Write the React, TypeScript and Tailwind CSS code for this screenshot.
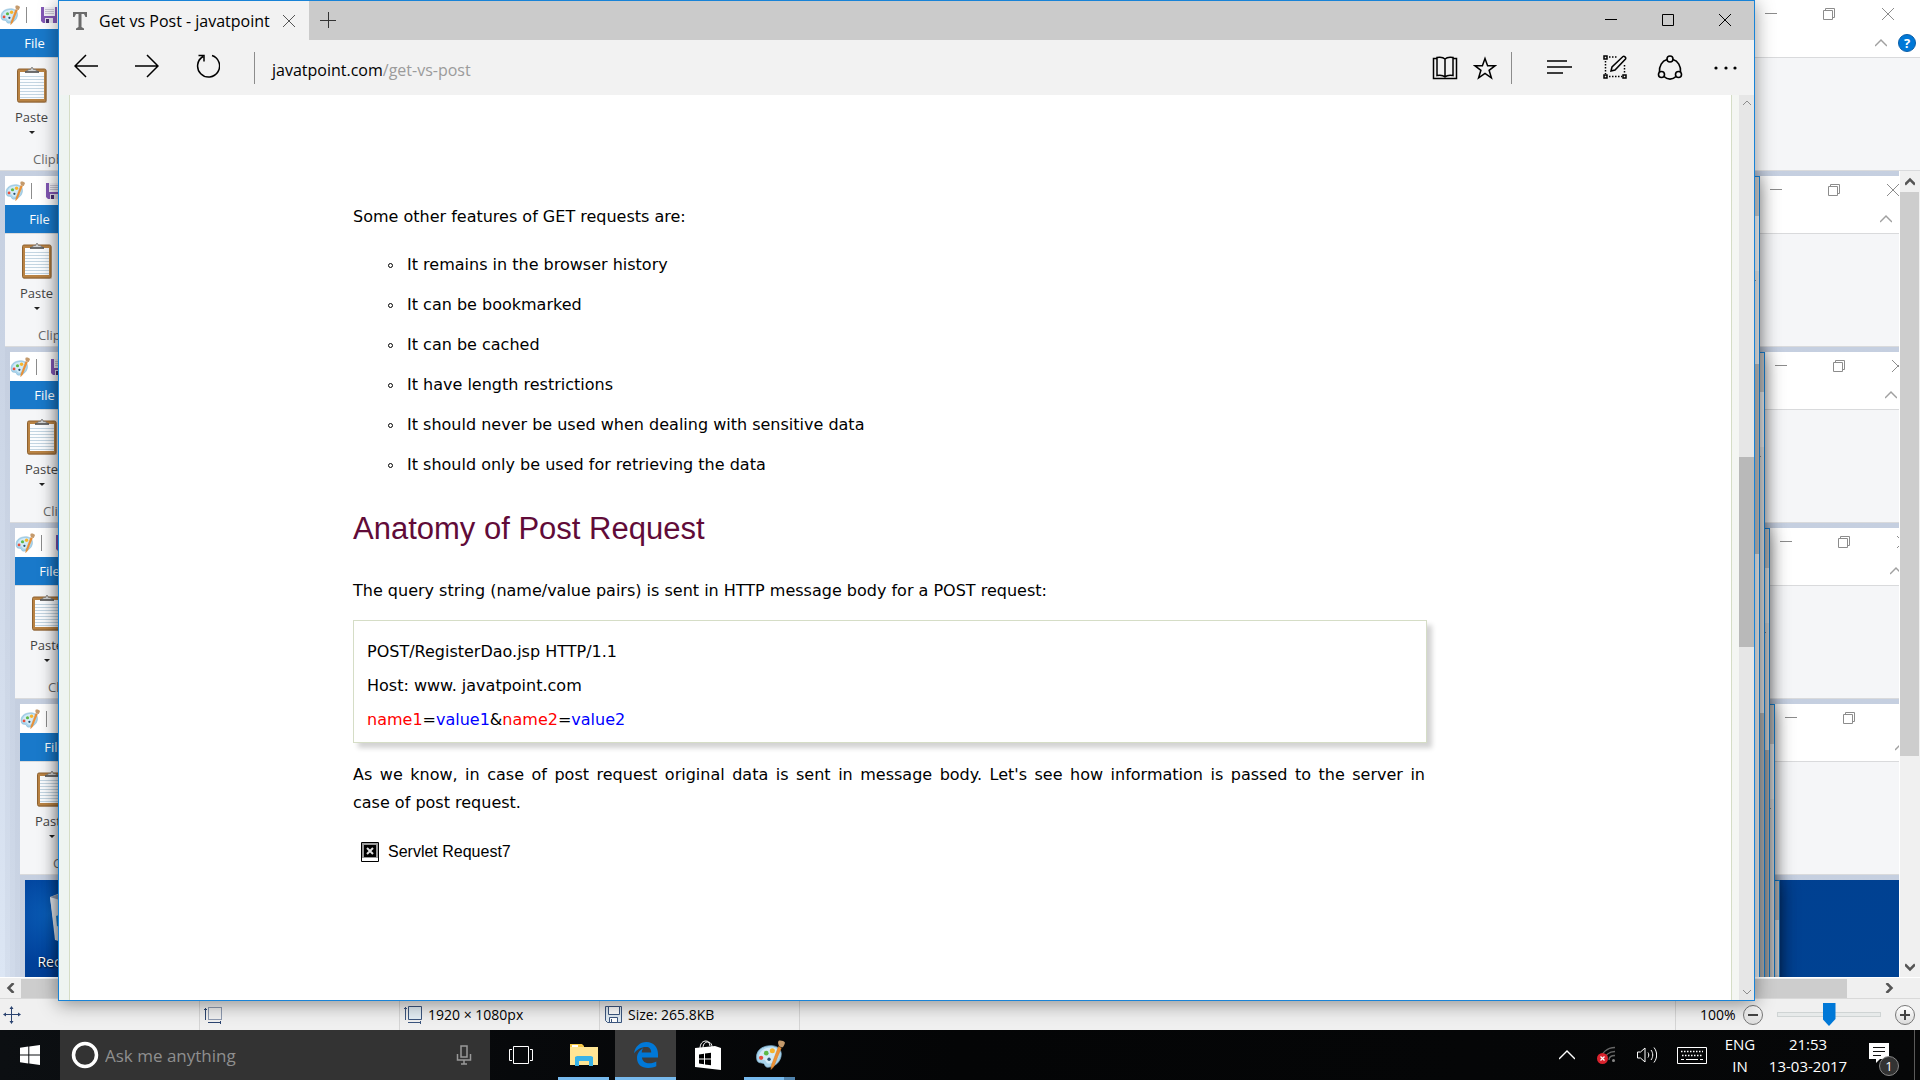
import React from 'react';

const uiFont = "font-['Open_Sans','Noto_Sans',sans-serif]";
const pageFont = "font-['DejaVu_Sans',sans-serif]";

/* ---------- Icons ---------- */

const PaletteIcon: React.FC<{ className?: string }> = ({ className }) => (
  <svg viewBox="0 0 32 32" className={className}>
    <path d="M2 21C0 12 7 6 17 6c7 0 11 4 11 9 0 8-7 14-14 14-4 0-3-3-5-4-3-1-6 0-7-4z" fill="#a9d4ec" stroke="#7fb0cf" strokeWidth=".8" />
    <path d="M4 19c0-7 6-11 13-11 5 0 9 2 9 6 0 6-5 10-10 11-4 1-4-3-6-4-2 0-5 1-6-2z" fill="#d3ebf7" />
    <circle cx="6.500" cy="19" r="2.300" fill="#e8503c" />
    <circle cx="12" cy="14" r="2.500" fill="#5cb947" />
    <circle cx="18.500" cy="11.500" r="2.700" fill="#f7b32b" />
    <circle cx="15" cy="20.500" r="1.800" fill="#27506f" />
    <path d="M25 7l3 1.500-8 20-3 3 .5-4.500z" fill="#ef9234" stroke="#c97a2c" strokeWidth=".5" />
    <path d="M25 1c2-1 6 0 7 2-1 3-2 5-3 5l-3-1c-1-2-2-4-1-6z" fill="#c49a6c" />
  </svg>
);

const SaveIcon = () => (
  <svg viewBox="0 0 16 16" className="size-4 shrink-0">
    <path d="M0 0h16v16H2l-2-2z" fill="#8358b5" />
    <path d="M3 0h11v9H3z" fill="#f4f3f8" />
    <path d="M4 2.500h9M4 4.500h9M4 6.500h9" stroke="#c9c6d4" />
    <path d="M4 11h8v5H4z" fill="#e7e4ef" />
    <path d="M5 12h3v4H5z" fill="#4b3274" />
  </svg>
);

const ClipboardIcon = () => (
  <svg viewBox="0 0 32 38" className="h-[38px] w-8">
    <rect x="2" y="4" width="29" height="33" rx="1.500" fill="#8d5f2b" opacity=".35" />
    <rect x="1.500" y="3" width="28.500" height="33" rx="1.500" fill="#b98344" stroke="#8d6130" />
    <rect x="4" y="6" width="24" height="27" fill="#fbfdff" />
    <path d="M4 10.500h24M4 13.500h24M4 16.500h24M4 19.500h24M4 22.500h24M4 25.500h24M4 28.500h24M4 31.500h24" stroke="#c3d5e2" />
    <path d="M9 6l4-2.500h1.500L16 1l1.500 2.500H19L23 6z" fill="#d0d0d0" stroke="#777" strokeWidth=".8" />
    <path d="M9 6h14" stroke="#555" strokeWidth="1.500" />
  </svg>
);

const Minimize = () => (
  <svg viewBox="0 0 12 12" className="size-3" stroke="currentColor"><path d="M0 5.500h12" /></svg>
);
const Maximize = () => (
  <svg viewBox="0 0 12 12" className="size-3" stroke="currentColor" fill="none"><path d="M.5.500h11v11H.500z" /></svg>
);
const Restore = () => (
  <svg viewBox="0 0 12 12" className="size-3" stroke="currentColor" fill="none">
    <path d="M.5 2.500h9v9H.500zM2.500 2.500v-2h9v9h-2" />
  </svg>
);
const Close = () => (
  <svg viewBox="0 0 12 12" className="size-3" stroke="currentColor"><path d="M0 0l12 12M12 0L0 12" /></svg>
);

const Chevron: React.FC<{ d: string; className?: string; width?: number }> = ({ d, className, width = 1 }) => (
  <svg viewBox="0 0 12 12" className={className} fill="none" stroke="currentColor" strokeWidth={width}>
    <path d={d} />
  </svg>
);
const UP = 'M0 9l6-6 6 6';
const DOWN = 'M0 3l6 6 6-6';
const LEFT = 'M9 0L3 6l6 6';
const RIGHT = 'M3 0l6 6-6 6';

const RecycleBinIcon = () => (
  <svg viewBox="0 0 50 50" className="size-[50px]">
    <path d="M1 5l10-4 28 1 10 4-5 42-8 2H12l-5-2z" fill="#c4ccd8" />
    <path d="M1 5l10 2v42l-5-1z" fill="#e4e8ee" />
    <path d="M1 5l10-3 28 1 10 3-12 3H14z" fill="#8f9bb0" />
    <path d="M7 24l9-3 8 9-6 8-10-4z" fill="#1d86d6" />
  </svg>
);

/* ---------- Paint window ---------- */

const IconButton: React.FC<{ label: string; className: string; children: React.ReactNode }> = ({ label, className, children }) => (
  <button type="button" aria-label={label} className={`flex shrink-0 items-center justify-center ${className}`}>
    {children}
  </button>
);

const PaintRibbon: React.FC<{ level: number }> = ({ level }) => (
  <header className="shrink-0 bg-white">
    <div className="flex h-[29px] items-center">
      <PaletteIcon className="size-5" />
      <div className="ml-1.5 h-4 w-px bg-[#8c8c8c]" />
      <div className="ml-3.5"><SaveIcon /></div>
      <div className="ml-auto flex self-start text-[#8c8c8c]">
        <IconButton label="Minimize" className="h-7 w-[62px]"><Minimize /></IconButton>
        <IconButton label="Restore" className="h-7 w-[54px]"><Restore /></IconButton>
        <IconButton label="Close" className="h-7 w-16"><Close /></IconButton>
      </div>
    </div>
    <div className="flex h-7 items-center">
      <button type="button" className="h-7 w-[69px] bg-[#1979ca] text-[13px] leading-7 text-white">File</button>
      <div className="ml-auto flex items-center gap-[11px] pr-1">
        <button type="button" aria-label="Collapse the ribbon" className="text-[#a0a0a0]">
          <Chevron d={UP} className="size-3" width={1.5} />
        </button>
        <button type="button" aria-label="Help" className="size-[18px] rounded-full border border-[#0a5ea8] bg-[#0078d7] text-[13px] leading-4 font-bold text-white">
          {level === 0 && '?'}
        </button>
      </div>
    </div>
    <div className="flex h-[114px] flex-col border-y border-[#d9dadc] bg-[#f5f6f8] pt-2">
      <button type="button" className="flex w-[63px] flex-col items-center">
        <ClipboardIcon />
        <span className="mt-[3px] text-[13px] leading-5 text-[#444]">Paste</span>
        <svg viewBox="0 0 6 3" className="mt-1 h-[3px] w-1.5"><path d="M0 0h6L3 3z" fill="#222" /></svg>
      </button>
      <span className="mt-[15px] ml-[33px] text-[13px] leading-5 text-[#6a6a6a]">Clipboard</span>
    </div>
  </header>
);

const HorizontalScroll = () => (
  <div className="flex h-[21px] shrink-0 items-center border-t border-white bg-[#f0f0f0] pr-6 text-[#555]">
    <IconButton label="Scroll left" className="h-5 w-[21px]"><Chevron d={LEFT} className="size-2.5" width={3} /></IconButton>
    <div className="mr-[35px] h-[19px] flex-1 bg-[#cdcdcd]" />
    <IconButton label="Scroll right" className="h-5 w-3.5"><Chevron d={RIGHT} className="size-2.5" width={3} /></IconButton>
  </div>
);

const VerticalScroll = () => (
  <div className="flex w-[21px] shrink-0 flex-col items-center border-l border-white bg-[#f0f0f0] text-[#555]">
    <IconButton label="Scroll up" className="h-[21px] w-5"><Chevron d={UP} className="size-2.5" width={3} /></IconButton>
    <div className="w-[19px] flex-[564] self-start bg-[#cdcdcd]" />
    <div className="flex-[200]" />
    <IconButton label="Scroll down" className="h-[21px] w-5"><Chevron d={DOWN} className="size-2.5" width={3} /></IconButton>
  </div>
);

const ZoomButton: React.FC<{ label: string; d: string }> = ({ label, d }) => (
  <button type="button" aria-label={label} className="size-5 shrink-0 rounded-full border border-[#777] bg-gradient-to-b from-white to-[#dcdcdc]">
    <svg viewBox="0 0 18 18" className="size-[18px]" stroke="#444" strokeWidth="2"><path d={d} /></svg>
  </button>
);

const statusCell = 'flex h-full w-[200px] shrink-0 items-center gap-[5px] border-r border-[#d5d5d5] pb-0.5';

const StatusBar = () => (
  <footer className="flex h-8 shrink-0 items-center border-t border-[#d9d9d9] bg-[#f0f0f0] pt-0.5 text-sm text-black">
    <div className={`${statusCell} pl-[3px]`}>
      <svg viewBox="0 0 18 18" className="size-[18px]" stroke="#2b4470" fill="#2b4470">
        <path d="M8.500 1v16M1 8.500h16" />
        <path d="M8.500 0l2 3h-4zM8.500 18l2-3h-4zM0 8.500l3-2v4zM18 8.500l-3-2v4z" stroke="none" />
      </svg>
    </div>
    <div className={`${statusCell} pl-1`}>
      <svg viewBox="0 0 19 18" className="h-[18px] w-[19px]" fill="none" stroke="#2b4470">
        <path d="M4.500 1.500h13v12h-13z" strokeDasharray="1 1" />
        <path d="M1.500 14V2M0 3.500h3M4 16.500h13M16.500 15v3" />
      </svg>
    </div>
    <div className={`${statusCell} pl-1`}>
      <svg viewBox="0 0 19 18" className="h-[18px] w-[19px]" fill="none" stroke="#3b557e">
        <path d="M4.500.500h13v13h-13z" fill="#e3eef5" />
        <path d="M1.500 14V1M0 2.500h3M4 16.500h13M16.500 15v3" />
      </svg>
      <span>1920 × 1080px</span>
    </div>
    <div className={`${statusCell} pl-[5px]`}>
      <svg viewBox="0 0 18 18" className="size-[18px]" fill="#dfeaf2" stroke="#3b557e">
        <path d="M.5.500h16v16h-14l-2-2z" />
        <path d="M3.500.500h11v8h-11zM4.500 11.500h8v5h-8z" fill="#fff" />
        <path d="M6.500 13v3" />
      </svg>
      <span>Size: 265.8KB</span>
    </div>
    <div className="ml-auto flex h-full w-[245px] items-center border-l border-[#d5d5d5] pr-[5px] pb-0.5 pl-6">
      <span className="w-[43px]">100%</span>
      <ZoomButton label="Zoom out" d="M4 9h10" />
      <input
        type="range"
        aria-label="Zoom"
        defaultValue={50}
        className="mx-3.5 h-6 min-w-0 flex-1 appearance-none bg-transparent [&::-webkit-slider-runnable-track]:h-[5px] [&::-webkit-slider-runnable-track]:border [&::-webkit-slider-runnable-track]:border-[#cfd4d4] [&::-webkit-slider-runnable-track]:bg-[#e7eaea] [&::-webkit-slider-thumb]:-mt-2.5 [&::-webkit-slider-thumb]:h-[23px] [&::-webkit-slider-thumb]:w-[13px] [&::-webkit-slider-thumb]:appearance-none [&::-webkit-slider-thumb]:bg-[#0078d7] [&::-webkit-slider-thumb]:[clip-path:polygon(0_0,100%_0,100%_70%,50%_100%,0_70%)]"
      />
      <ZoomButton label="Zoom in" d="M4 9h10M9 4v10" />
    </div>
  </footer>
);

const Wallpaper = () => (
  <div className="h-full bg-[#004494] bg-[radial-gradient(circle_at_24px_34px,#0a5cb5_0,#00409a_50px,transparent_90px),linear-gradient(165deg,#003c8e_0,#004494_50%,#00509f_100%)]">
    <div className="flex w-[98px] flex-col items-center pt-3">
      <RecycleBinIcon />
      <span className="mt-2 text-sm leading-6 text-white [text-shadow:1px_1px_2px_#000]">Recycle Bin</span>
    </div>
  </div>
);

// Each capture in the Paint canvas shows the desktop of the capture before it.
const LAST_LEVEL = 5;

const Screen: React.FC<{ level: number; children?: React.ReactNode }> = ({ level, children }) => (
  <div className="relative h-full">
    {level === LAST_LEVEL ? (
      <Wallpaper />
    ) : (
      <div className="flex h-full flex-col">
        <PaintRibbon level={level} />
        <div className="flex min-h-0 flex-1">
          <div className="min-w-0 flex-1 overflow-hidden bg-gradient-to-b from-[#c5cfe0] to-[#dce6f4] pt-[5px] pl-[5px]">
            <div className="h-screen w-screen">
              <Screen level={level + 1} />
            </div>
          </div>
          {level === 0 && <VerticalScroll />}
        </div>
        {level === 0 && <HorizontalScroll />}
        {level === 0 && <StatusBar />}
      </div>
    )}
    <BrowserWindow level={level}>{children}</BrowserWindow>
  </div>
);

/* ---------- Browser window ---------- */

const thumbs = [
  'mt-[342px] h-[190px]',
  'mt-[73px] h-[190px]',
  'mt-[246px] h-[300px]',
  'mt-[107px] h-[260px]',
  'hidden',
  'hidden',
];

const TitleBar = () => (
  <>
    <div className="flex h-[39px] w-[250px] items-center bg-[#f2f2f2] pl-3.5">
      <svg viewBox="0 0 14 18" className="h-[18px] w-3.5" fill="#6b6b6b">
        <path d="M0 0h14v5h-1.500L11 2H8.500v13l2.500 1.500V18H3v-1.500L5.500 15V2H3L1.500 5H0z" />
      </svg>
      <span className="ml-3 w-[180px] text-base leading-5 text-black">Get vs Post - javatpoint</span>
      <IconButton label="Close tab" className="size-5 text-[#555]"><Close /></IconButton>
    </div>
    <IconButton label="New tab" className="h-[37px] w-[38px]">
      <svg viewBox="0 0 16 16" className="size-4" stroke="#333"><path d="M0 8.500h16M8.500 0v16" /></svg>
    </IconButton>
    <div className="mr-px ml-auto flex text-black">
      <IconButton label="Minimize window" className="h-[38px] w-[57px]"><Minimize /></IconButton>
      <IconButton label="Maximize window" className="h-[38px] w-[57px]"><Maximize /></IconButton>
      <IconButton label="Close window" className="h-[38px] w-[57px]"><Close /></IconButton>
    </div>
  </>
);

const Toolbar = () => (
  <>
    <IconButton label="Back" className="h-[53px] w-[54px]">
      <svg viewBox="0 0 24 24" className="mb-1 size-6" fill="none" stroke="#000" strokeWidth="1.500"><path d="M24 12H1M12 1L1 12l11 11" /></svg>
    </IconButton>
    <IconButton label="Forward" className="h-[53px] w-[68px]">
      <svg viewBox="0 0 24 24" className="mb-1 size-6" fill="none" stroke="#000" strokeWidth="1.500"><path d="M0 12h23M12 1l11 11-11 11" /></svg>
    </IconButton>
    <IconButton label="Refresh" className="h-[53px] w-[54px]">
      <svg viewBox="0 0 24 24" className="mb-1 size-6" fill="none" stroke="#000" strokeWidth="1.500">
        <path d="M7 2.500a11 11 0 1 0 9-1M2.500 1.500H8v6" />
      </svg>
    </IconButton>
    <div className="ml-[19px] h-8 w-px bg-[#8c8c8c]" />
    <div
      role="textbox"
      aria-label="Address"
      contentEditable
      suppressContentEditableWarning
      className="ml-[17px] min-w-0 flex-1 pt-1 text-base leading-6 text-black outline-none"
    >
      javatpoint.com<span className="text-[#9b9b9b]">/get-vs-post</span>
    </div>
    <IconButton label="Reading view" className="h-[55px] w-10">
      <svg viewBox="0 0 26 24" className="h-6 w-[26px]" fill="none" stroke="#000" strokeWidth="1.500">
        <path d="M5 2.500H1.500v20h23v-20H21" />
        <path d="M13 3v17.500M13 3c-2-2-5-2-8-1.500v18c3-.5 6-.5 8 1.500 2-2 5-2 8-1.500v-18c-3-.5-6-.5-8 1.500z" />
      </svg>
    </IconButton>
    <IconButton label="Add to favorites" className="h-[55px] w-10">
      <svg viewBox="0 0 24 24" className="size-6" fill="none" stroke="#000" strokeWidth="1.500">
        <path d="M12 2.500l2.600 7.200h7.600l-6.100 4.600 2.300 7.500L12 17.300l-6.400 4.500 2.300-7.500-6.100-4.600h7.600z" />
      </svg>
    </IconButton>
    <div className="mr-5 ml-1.5 h-8 w-px bg-[#8c8c8c]" />
    <IconButton label="Hub" className="h-[53px] w-[55px]">
      <svg viewBox="0 0 25 16" className="mb-0.5 h-4 w-[25px]" stroke="#000" strokeWidth="1.500"><path d="M0 2h20M0 8h25M0 14h16" /></svg>
    </IconButton>
    <IconButton label="Make a web note" className="h-[53px] w-[55px]">
      <svg viewBox="0 0 24 24" className="mb-0.5 size-6" fill="none" stroke="#000" strokeWidth="1.500">
        <path d="M1 1h3v3H1zM1 20h3v3H1zM20 20h3v3h-3z" />
        <path d="M6 2h9M2.500 6v13M6 21.500h13M21.500 10v9" strokeDasharray="1.500 1.500" />
        <path d="M8 16l1-4L20 1.500c1-.8 3.500.8 2.500 2.500L12 15z" />
      </svg>
    </IconButton>
    <IconButton label="Share" className="h-[53px] w-[55px]">
      <svg viewBox="0 0 26 26" className="size-[26px]" fill="none" stroke="#000" strokeWidth="1.600">
        <circle cx="13" cy="4" r="3" />
        <circle cx="4.500" cy="19.500" r="3" />
        <circle cx="21.500" cy="19.500" r="3" />
        <path d="M10 4.500C5 6 2 11 2.500 17M16 4.500c5 1.500 8 6.500 7.500 12.500M7 21.500c3.500 3.500 8.500 3.500 12 0" />
      </svg>
    </IconButton>
    <IconButton label="More" className="h-[55px] w-[57px]">
      <svg viewBox="0 0 24 4" className="h-1 w-6"><circle cx="2" cy="2" r="1.600" /><circle cx="12" cy="2" r="1.600" /><circle cx="21" cy="2" r="1.600" /></svg>
    </IconButton>
  </>
);

const BrowserWindow: React.FC<{ level: number; children?: React.ReactNode }> = ({ level, children }) => (
  <section className="absolute top-0 right-[165px] bottom-[29px] left-[58px] flex flex-col border border-[#1883d7] bg-white shadow-[0_3px_18px_rgba(0,0,0,0.42)]">
    <div className="flex h-[39px] shrink-0 bg-[#cbcbcb]">{level === 0 && <TitleBar />}</div>
    <div className="flex h-[55px] shrink-0 items-center bg-[#f2f2f2]">{level === 0 && <Toolbar />}</div>
    <div className="flex min-h-0 flex-1">
      <div className="flex min-w-0 flex-1 bg-gradient-to-r from-[#eef4f1] to-[#f4f6f3] pr-[7px] pl-[10px]">
        <main className="flex-1 overflow-hidden border-x border-[#d5ddc6] bg-white">{children}</main>
      </div>
      <div className="flex w-[15px] shrink-0 flex-col bg-[#e6e6e6] text-[#8c8c8c]">
        <IconButton label="Page up" className="mb-1 h-4 w-[15px]"><Chevron d={UP} className="size-2" width={1.5} /></IconButton>
        <div className={`w-full bg-[#b9b9b9] ${thumbs[level]}`} />
        <IconButton label="Page down" className="mt-auto h-4 w-[15px]"><Chevron d={DOWN} className="size-2" width={1.5} /></IconButton>
      </div>
    </div>
  </section>
);

const features = [
  'It remains in the browser history',
  'It can be bookmarked',
  'It can be cached',
  'It have length restrictions',
  'It should never be used when dealing with sensitive data',
  'It should only be used for retrieving the data',
];

const Article = () => (
  <article className={`${pageFont} pt-[108px] pr-[304px] pl-[283px] text-base leading-7 text-black`}>
    <p>Some other features of GET requests are:</p>
    <ul className="mt-5 flex flex-col gap-3 pl-[35px]">
      {features.map((feature) => (
        <li key={feature} className="flex items-center">
          <span className="mr-3.5 size-[5px] rounded-full border border-black" />
          {feature}
        </li>
      ))}
    </ul>
    <h2 className="mt-[30px] font-['Liberation_Sans',sans-serif] text-[31px] leading-10 text-[#610b38]">Anatomy of Post Request</h2>
    <p className="mt-7">The query string (name/value pairs) is sent in HTTP message body for a POST request:</p>
    <div className="mt-[15px] border border-[#d5ddc6] px-[13px] pt-3.5 pb-[5px] leading-[34px] shadow-[5px_5px_5px_#d3d3d3]">
      <p>POST/RegisterDao.jsp HTTP/1.1</p>
      <p>Host: www. javatpoint.com</p>
      <p>
        <span className="text-[#f00]">name1</span>=<span className="text-[#00f]">value1</span>&amp;
        <span className="text-[#f00]">name2</span>=<span className="text-[#00f]">value2</span>
      </p>
    </div>
    <p className="mt-[18px] pr-0.5 text-justify">
      As we know, in case of post request original data is sent in message body. Let's see how information is passed to the server in case&nbsp;of post request.
    </p>
    <figure className="mt-[21px] ml-2 flex items-center gap-[9px] font-['Liberation_Sans',sans-serif] text-base leading-7">
      <svg viewBox="0 0 18 20" className="h-5 w-[18px]">
        <path d="M.5.500h17v19H.500z" fill="#fff" stroke="#000" />
        <path d="M1 1h16v15H1z" fill="#9a9a9a" />
        <path d="M3 3h12v12H3z" fill="#000" />
        <path d="M6 6l6 6M12 6l-6 6" stroke="#ddd" strokeWidth="2" />
      </svg>
      <figcaption>Servlet Request7</figcaption>
    </figure>
  </article>
);

/* ---------- Taskbar ---------- */

const TaskButton: React.FC<{ label: string; active?: boolean; running?: boolean; stacked?: boolean; children: React.ReactNode }> = ({
  label,
  active,
  running,
  stacked,
  children,
}) => (
  <button type="button" aria-label={label} className={`flex h-full w-[61px] flex-col items-center ${active ? 'bg-[#3c3c3c]' : ''}`}>
    <span className="flex flex-1 items-center pt-0.5">{children}</span>
    <span className={`flex h-[3px] ${active ? 'w-full' : 'w-[51px]'} ${running || active ? 'bg-[#76b9ed]' : ''}`}>
      {stacked && <span className="ml-auto w-[11px] bg-[#5083ad]" />}
    </span>
  </button>
);

const Taskbar = () => (
  <nav className="flex h-[50px] shrink-0 items-center bg-black bg-gradient-to-r from-[#0c0f12] via-[#040506] to-[#060708] text-white">
    <IconButton label="Start" className="h-full w-[60px]">
      <svg viewBox="0 0 20 20" className="size-5" fill="#fff">
        <path d="M0 2.800l8.300-1.200v7.900H0zM9.300 1.400L20 0v9.500H9.300zM0 10.500h8.300v7.900L0 17.200zM9.300 10.500H20V20L9.300 18.600z" />
      </svg>
    </IconButton>
    <div className="flex h-full w-[430px] items-center bg-[#333] pr-[18px] pl-[11px]">
      <svg viewBox="0 0 28 28" className="size-7" fill="none" stroke="#fff" strokeWidth="3.500"><circle cx="14" cy="14" r="11.500" /></svg>
      <input aria-label="Search" placeholder="Ask me anything" className="ml-1.5 min-w-0 flex-1 bg-transparent pt-0.5 text-[17px] outline-none placeholder:text-[#8f8f8f]" />
      <svg viewBox="0 0 16 20" className="h-5 w-4" fill="none" stroke="#999" strokeWidth="1.500">
        <path d="M5 1h6v11H5zM1.500 9v6h13V9M8 15v4M5 19h6" />
      </svg>
    </div>
    <div className="flex h-full gap-px">
      <IconButton label="Task view" className="mr-px h-full w-[61px]">
        <svg viewBox="0 0 24 18" className="h-[18px] w-6" fill="none" stroke="#fff"><path d="M4.500.500h15v17h-15zM3 3.500H.500v11H3M21 3.500h2.500v11H21" /></svg>
      </IconButton>
      <TaskButton label="File Explorer" running>
        <svg viewBox="0 0 28 24" className="h-6 w-7">
          <path d="M0 1h12l2 2v3H0z" fill="#f7c948" />
          <path d="M2 2h6v2H2z" fill="#fff" />
          <path d="M0 4h28v18H0z" fill="#ffe594" />
          <path d="M5 23v-9l2-1h14l2 1v9h-4v-5H9v5z" fill="#38b3e8" />
        </svg>
      </TaskButton>
      <TaskButton label="Microsoft Edge" active>
        <svg viewBox="0 0 24 26" className="h-[26px] w-6" fill="#0078d7">
          <path d="M0 11.500C1 4.500 6 0 12.500 0 19.500 0 24 5 24 12v3.500H8c.3 4 3.500 5.800 7.500 5.800 2.500 0 4.800-.6 6.800-1.800v4.800C20 25.500 17.300 26 14.300 26 7.500 26 3 22.500 3 16c0-4.500 2.500-8 6.300-9.800C8.200 7.500 7.800 9 7.700 10.500h9.500C17.200 7 15.500 5 12 5 7 5 2.800 7.500 0 11.500z" />
        </svg>
      </TaskButton>
      <TaskButton label="Store">
        <svg viewBox="0 0 26 30" className="h-[30px] w-[26px]">
          <path d="M5 9c0-6 3-8 6-8 2.500 0 3.500 2 4 5M8 8c0-5 3-6 5-6 3 0 4 3 4 5" fill="none" stroke="#fff" />
          <path d="M0 8l20-2 6 2v22L0 27z" fill="#fff" />
          <path d="M4 14.500l5-.7v4.700H4zM10 13.600l6-.8v5.700h-6zM4 19.500h5v4.700l-5-.7zM10 19.500h6v5.700l-6-.8z" fill="#000" />
        </svg>
      </TaskButton>
      <TaskButton label="Paint" running stacked>
        <PaletteIcon className="size-[30px]" />
      </TaskButton>
    </div>
    <div className="ml-auto flex h-full items-center">
      <IconButton label="Show hidden icons" className="h-full w-10"><Chevron d={UP} className="size-4" /></IconButton>
      <IconButton label="Network" className="h-full w-10">
        <svg viewBox="0 0 20 18" className="h-[18px] w-5" fill="none" stroke="#666" strokeWidth="1.300">
          <path d="M4 14C4 7 10 1.500 18 1.500M8 14c0-5 4-8.500 10-8.500M12 14c0-3 2.500-4.500 6-4.500" />
          <circle cx="16.500" cy="14.500" r="1.500" fill="#888" stroke="none" />
          <circle cx="5.500" cy="12.500" r="5.500" fill="#d9232e" stroke="none" />
          <path d="M3.500 10.500l4 4M7.500 10.500l-4 4" stroke="#fff" />
        </svg>
      </IconButton>
      <IconButton label="Volume" className="h-full w-10">
        <svg viewBox="0 0 20 18" className="h-[18px] w-5" fill="none" stroke="#fff">
          <path d="M.5 6h3L8 2v14l-4.500-4h-3zM11 6.500c1 1.500 1 3.500 0 5M14 4c2.300 3 2.300 7 0 10M17 1.500c3.500 4.500 3.500 10.500 0 15" />
        </svg>
      </IconButton>
      <IconButton label="Touch keyboard" className="h-full w-[50px]">
        <svg viewBox="0 0 30 17" className="h-[17px] w-[30px]" fill="none" stroke="#fff">
          <path d="M.5.500h29v16H.500z" />
          <path d="M4 4.500h22M5 8.500h20" strokeDasharray="1.500 1.500" strokeWidth="1.500" />
          <path d="M4 12.500h3M9 12.500h12M23 12.500h3" />
        </svg>
      </IconButton>
      <button type="button" className="h-full w-[46px] text-[15px] leading-[22px]">ENG<br />IN</button>
      <button type="button" className="h-full w-[90px] text-[15px] leading-[22px]">21:53<br />13-03-2017</button>
      <button type="button" aria-label="Notifications" className="relative ml-4 h-[42px] w-[30px]">
        <svg viewBox="0 0 20 20" className="mb-1 size-5"><path d="M0 0h20v16h-9l-4 4v-4H0z" fill="#fff" /><path d="M4 4.500h12M4 8.500h12M4 12.500h8" stroke="#111" /></svg>
        <span className="absolute right-0 bottom-0 size-5 rounded-full border border-[#888] bg-[#333] text-[13px] leading-[18px]">1</span>
      </button>
      <div className="mr-[5px] ml-[15px] h-full w-px bg-[#5a5a5a]" />
    </div>
  </nav>
);

const App = () => (
  <div className={`${uiFont} flex h-screen flex-col overflow-hidden`}>
    <div className="min-h-0 flex-1 overflow-hidden">
      <Screen level={0}>
        <Article />
      </Screen>
    </div>
    <Taskbar />
  </div>
);

export default App;
